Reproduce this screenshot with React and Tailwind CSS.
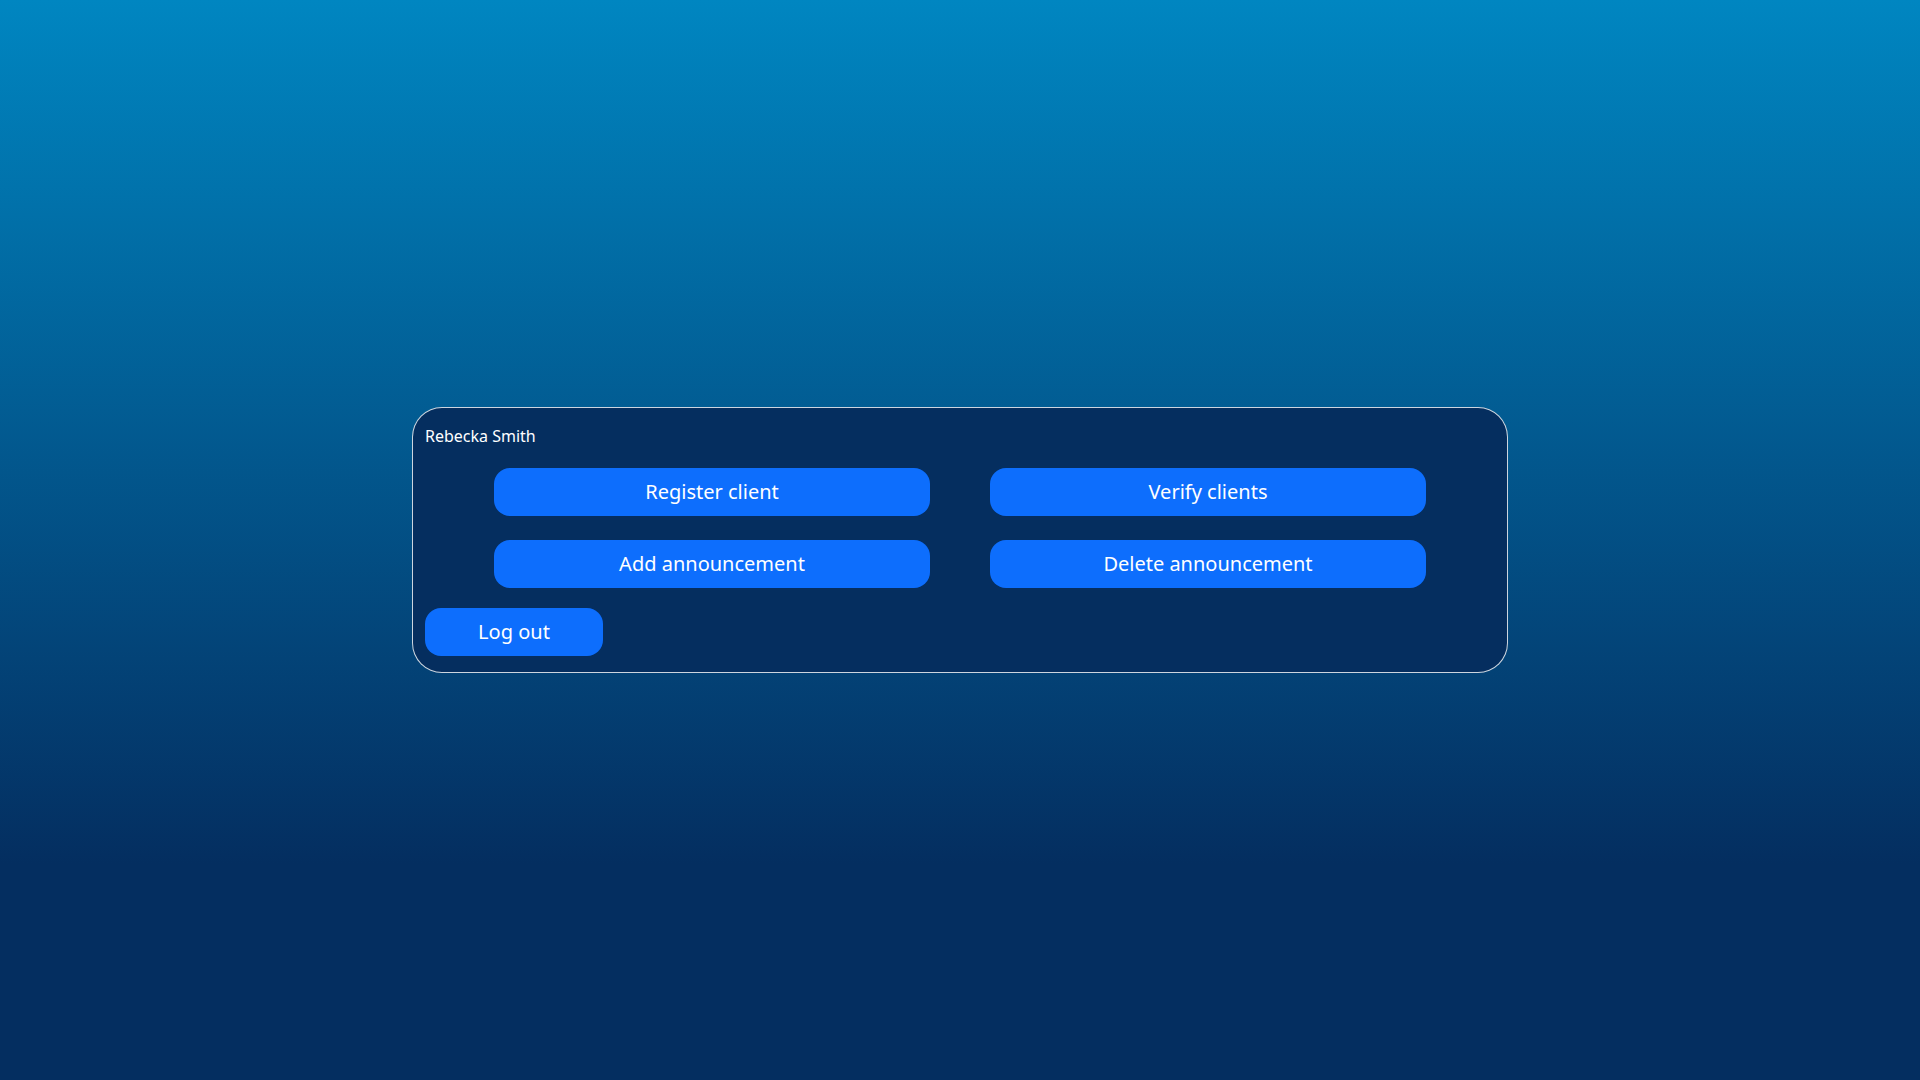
import React from 'react';

const actions = ['Register client', 'Verify clients', 'Add announcement', 'Delete announcement'];

function ActionButton({label, className = ''}) {
	return (
		<button
			type="button"
			className={`h-12 rounded-2xl bg-[#0d6efd] text-[20px] leading-7 text-white ${className}`}
		>
			{label}
		</button>
	);
}

export default function App() {
	return (
		<div className="flex min-h-screen items-center justify-center bg-[linear-gradient(to_bottom,#0086c1_0%,#042e60_80%,#042e60_100%)] font-['Noto_Sans',sans-serif]">
			<div className="w-[1096px] rounded-[30px] border border-white/80 bg-[#052e5f] px-3 py-4">
				<div className="text-base leading-6 text-white">Rebecka Smith</div>
				<div className="mt-5 grid grid-cols-[436px_436px] justify-center gap-x-[60px] gap-y-6">
					{actions.map((label) => (
						<ActionButton key={label} label={label} />
					))}
				</div>
				<div className="mt-5">
					<ActionButton label="Log out" className="w-[178px]" />
				</div>
			</div>
		</div>
	);
}
